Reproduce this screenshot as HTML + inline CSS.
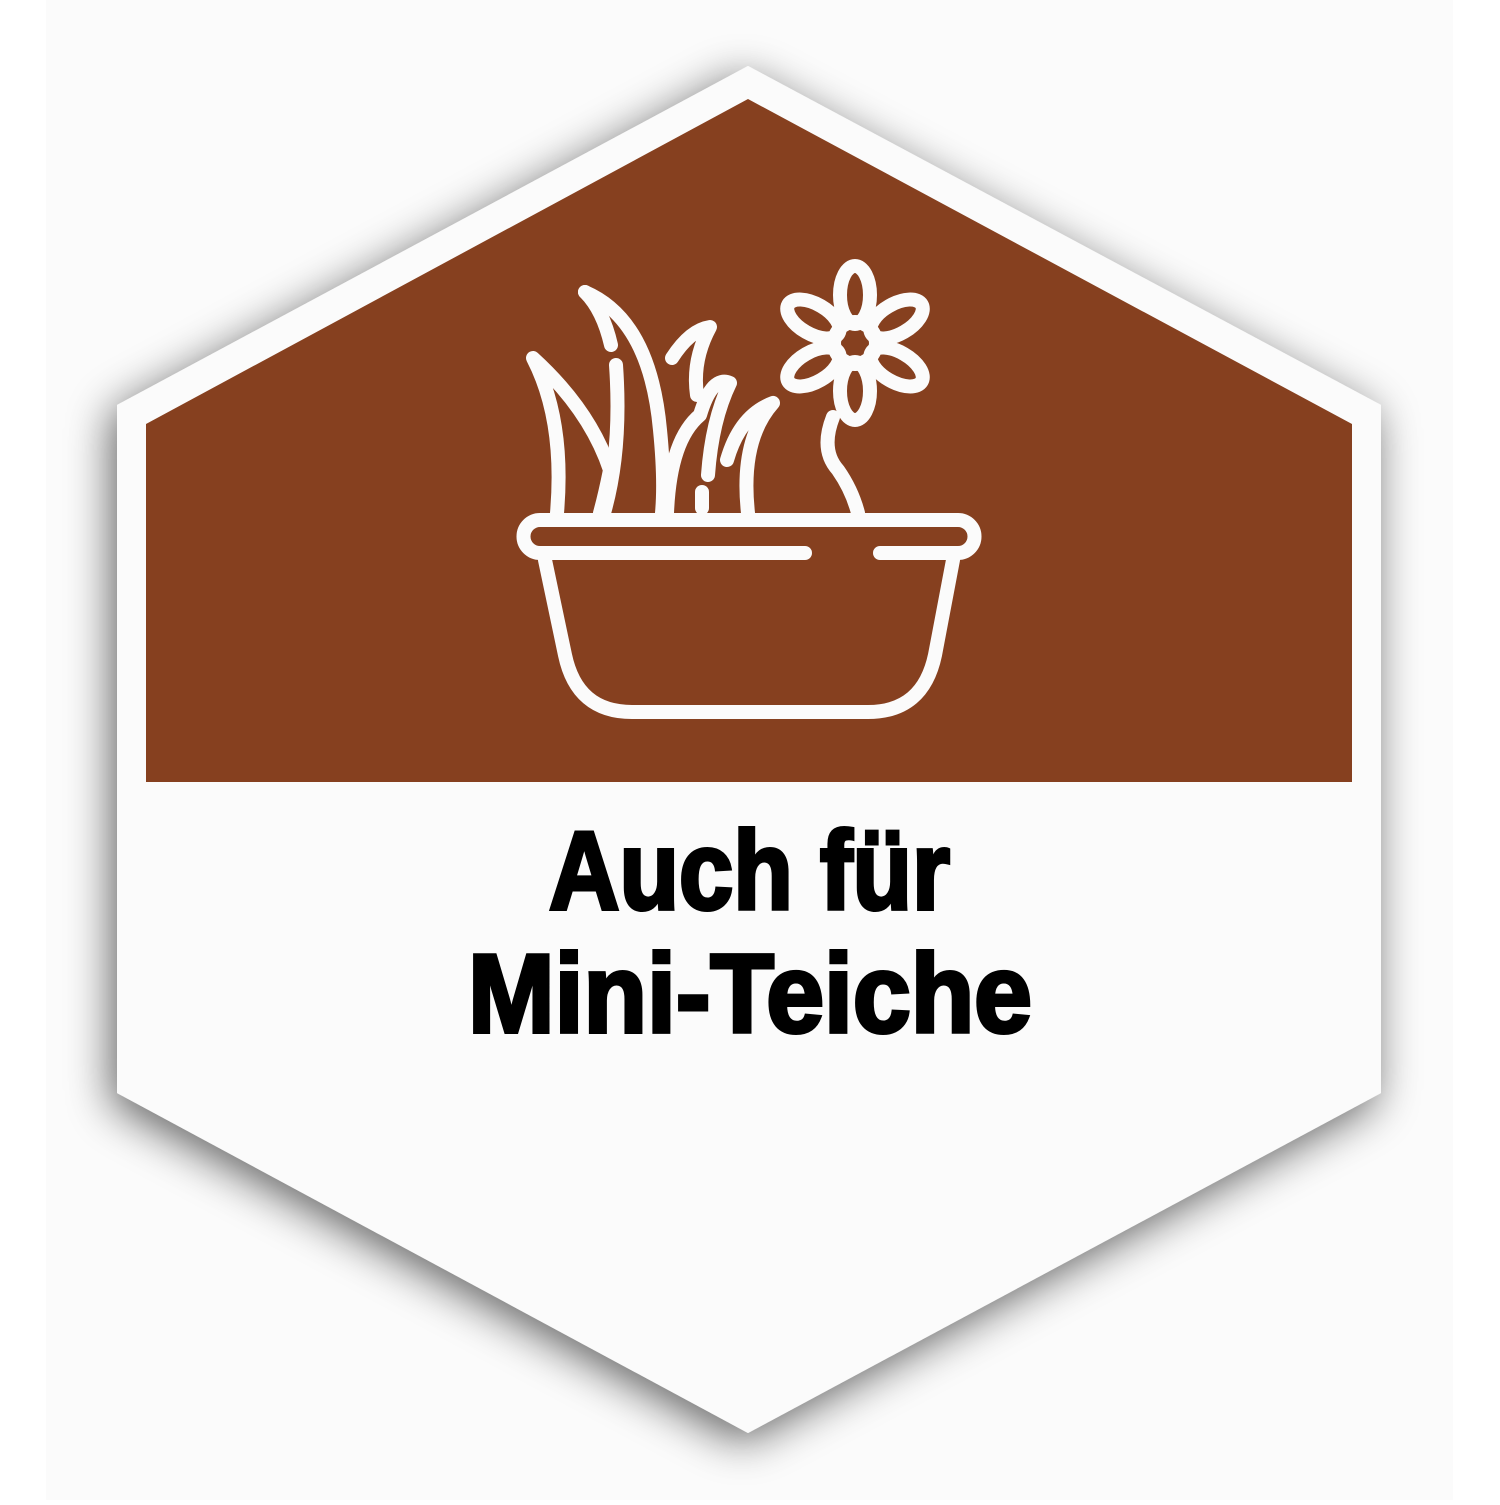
<!DOCTYPE html>
<html><head><meta charset="utf-8"><style>
html,body{margin:0;padding:0;background:#fff;}
body{width:1500px;height:1500px;position:relative;overflow:hidden;}
</style></head><body>
<svg width="1500" height="1500" viewBox="0 0 1500 1500" xmlns="http://www.w3.org/2000/svg">
<defs>
<filter id="sh" x="-20%" y="-20%" width="140%" height="140%">
<feGaussianBlur in="SourceAlpha" stdDeviation="22"/>
<feOffset dx="-6" dy="10"/>
<feComponentTransfer><feFuncA type="linear" slope="0.6"/></feComponentTransfer>
<feMerge><feMergeNode/><feMergeNode in="SourceGraphic"/></feMerge>
</filter>
</defs>
<rect x="46" y="0" width="1407" height="1500" fill="#fbfbfb"/>
<polygon points="748,66 1381,405 1381,1093 748,1433 117,1093 117,405" fill="#fbfbfb" filter="url(#sh)"/>
<polygon points="748,99 1352,424 1352,782 146,782 146,424" fill="#86401f"/>
<g fill="none" stroke="#fbfbfb" stroke-width="14" stroke-linecap="round" stroke-linejoin="round">
<path d="M805,553 H540 A16.5,16.5 0 0 1 540,520 H958 A16.5,16.5 0 0 1 958,553 H880"/>
<path d="M545,560 L565,655 Q577,712 632,712 H868 Q923,712 935,655 L953,560"/>
<path d="M557,513 Q565,420 533,358 Q590,410 610,470 Q605,495 600,513"/>
<path d="M585,292 Q650,320 660,430 Q665,480 662,513"/>
<path d="M585,292 Q603,310 611,345"/>
<path d="M616,365 Q622,450 604,513"/>
<path d="M667,513 Q670,440 700,415 Q712,375 730,383 Q712,420 708,475"/>
<path d="M672,358 Q690,330 710,327 Q692,360 697,395"/>
<path d="M702,492 V508"/>
<path d="M748,513 Q740,440 773,403 Q740,415 727,460"/>
<path d="M833,417 Q820,450 838,470 Q852,490 858,513"/>
<circle cx="855" cy="343" r="21"/>
<ellipse cx="855" cy="295" rx="15" ry="29"/>
<ellipse cx="855" cy="391" rx="15" ry="29"/>
<ellipse cx="855" cy="295" rx="15" ry="29" transform="rotate(60 855 343)"/>
<ellipse cx="855" cy="295" rx="15" ry="29" transform="rotate(120 855 343)"/>
<ellipse cx="855" cy="295" rx="15" ry="29" transform="rotate(240 855 343)"/>
<ellipse cx="855" cy="295" rx="15" ry="29" transform="rotate(300 855 343)"/>
</g>
<g font-family="Liberation Sans, Arial, sans-serif" font-weight="bold" font-size="111" fill="#000" stroke="#000" stroke-width="4">
<text x="549" y="909" textLength="401" lengthAdjust="spacingAndGlyphs">Auch für</text>
<text x="468" y="1032" textLength="564" lengthAdjust="spacingAndGlyphs">Mini-Teiche</text>
</g>
</svg>
</body></html>
